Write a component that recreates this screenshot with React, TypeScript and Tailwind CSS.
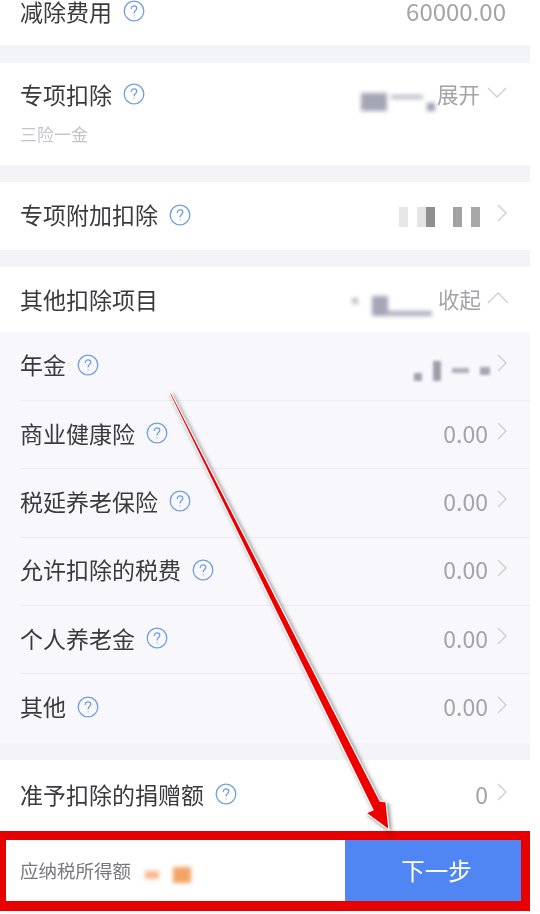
const font = '[font-family:"Noto_Sans_CJK_SC","Noto_Sans",sans-serif]';

function HelpIcon() {
  return (
    <svg width="22" height="22" viewBox="0 0 22 22" fill="none" stroke="#6f9fe0" strokeWidth="1.3" className="ml-[11px] shrink-0">
      <circle cx="11" cy="11" r="9.8" />
      <path d="M8.3 8.6c0-1.6 1.2-2.7 2.8-2.7s2.7 1 2.7 2.4c0 2.2-2.7 2.3-2.7 4.6" strokeLinecap="round" />
      <circle cx="11.1" cy="15.8" r="0.6" fill="#6f9fe0" stroke="none" />
    </svg>
  );
}

function ChevronRight() {
  return (
    <svg width="10" height="18" viewBox="0 0 10 18" fill="none" stroke="#cdcdd2" strokeWidth="1.3" className="ml-[9px] -mt-1 shrink-0">
      <path d="M1 1l8 8-8 8" />
    </svg>
  );
}

function Row({ label, value, mask }: { label: string; value?: string; mask?: React.ReactNode }) {
  return (
    <div className="flex h-full items-center justify-between pb-[3px] pr-[23px]">
      <div className="flex items-center text-[23px] text-[#3a3a3c]">
        {label}
        <HelpIcon />
      </div>
      <div className="flex items-center text-[23px] text-[#a3a3a8]">
        {mask}
        {value}
        <ChevronRight />
      </div>
    </div>
  );
}

const items = ['商业健康险', '税延养老保险', '允许扣除的税费', '个人养老金', '其他'];

export default function App() {
  return (
    <div className={`relative h-[914px] w-[540px] overflow-hidden bg-white ${font}`}>
      <div className="w-[530px] blur-[0.5px]">
        <div className="flex h-[45px] items-start justify-between pl-5 pr-[24px] text-[23px] leading-[22px] text-[#3a3a3c]">
          <div className="flex items-center">
            减除费用
            <HelpIcon />
          </div>
          <span className="text-[24px] text-[#a3a3a8]">60000.00</span>
        </div>
        <div className="h-[18px] bg-[#f3f4f7]" />

        <div className="flex h-[102px] justify-between pl-5 pr-[23px] pt-[15px]">
          <div>
            <div className="flex items-center text-[23px] leading-[32px] text-[#3a3a3c]">
              专项扣除
              <HelpIcon />
            </div>
            <div className="mt-[12px] text-[17px] leading-[24px] text-[#c4c4c8]">三险一金</div>
          </div>
          <div className="flex h-[32px] items-center text-[21.5px] text-[#a3a3a8]">
            <div className="mr-[2px] mt-4 flex items-end gap-[4px] blur-[2px]">
              <span className="h-[18px] w-[26px] bg-[#a4a5b5]" />
              <span className="mb-3 h-[4px] w-[32px] bg-[#b9bac6]" />
              <span className="h-[8px] w-[8px] bg-[#9a9bac]" />
            </div>
            展开
            <svg width="20" height="11" viewBox="0 0 20 11" fill="none" stroke="#cdcdd2" strokeWidth="1.3" className="ml-[7px] -mt-1">
              <path d="M1 1l9 9 9-9" />
            </svg>
          </div>
        </div>
        <div className="h-[17px] bg-[#f3f4f7]" />

        <div className="h-[68px] pl-5">
          <Row
            label="专项附加扣除"
            mask={
              <div className="mr-[8px] mt-1 flex gap-[9px]">
                <span className="h-[20px] w-[9px] bg-[#e6e6e6]" />
                <span className="h-[20px] w-[18px] bg-[linear-gradient(90deg,#e4e4e4_50%,#8f8f8f_50%)]" />
                <span className="ml-[9px] h-[20px] w-[9px] bg-[#a2a2a2]" />
                <span className="h-[20px] w-[9px] bg-[#a8a8a8]" />
              </div>
            }
          />
        </div>
        <div className="h-[17px] bg-[#f3f4f7]" />

        <div className="flex h-[65px] items-center justify-between pl-5 pr-[21px] text-[23px] text-[#3a3a3c]">
          其他扣除项目
          <div className="flex items-center text-[21.5px] text-[#a3a3a8]">
            <div className="mr-[6px] mt-3 flex items-end gap-[14px] blur-[2px]">
              <span className="mb-3 h-[6px] w-[6px] bg-[#b9bac6]" />
              <span className="h-[20px] w-[16px] bg-[#a4a5b5]" />
              <span className="-ml-[14px] h-[5px] w-[44px] bg-[#adaebd]" />
            </div>
            收起
            <svg width="22" height="12" viewBox="0 0 22 12" fill="none" stroke="#cdcdd2" strokeWidth="1.3" className="ml-[6px] -mt-1">
              <path d="M1 11L11 1l10 10" />
            </svg>
          </div>
        </div>

        <div className="h-[411px] bg-[#f8f8fc] pl-5">
          <div className="h-[69px] border-b border-[#ecedf1]">
            <Row
              label="年金"
              mask={
                <div className="mr-[-2px] mt-3 flex items-end gap-[11px] blur-[1.5px]">
                  <span className="h-[8px] w-[8px] bg-[#a0a1ae]" />
                  <span className="h-[20px] w-[8px] bg-[#9d9eac]" />
                  <span className="mb-2 h-[5px] w-[17px] bg-[#adaebd]" />
                  <span className="mb-[6px] h-[8px] w-[10px] bg-[#a4a5b5]" />
                </div>
              }
            />
          </div>
          {items.map((label, i) => (
            <div key={label} className={`h-[68.25px] ${i < 4 ? 'border-b border-[#ecedf1]' : ''}`}>
              <Row label={label} value="0.00" />
            </div>
          ))}
        </div>
        <div className="h-[17px] bg-[#f3f4f7]" />

        <div className="h-[71px] pl-5">
          <Row label="准予扣除的捐赠额" value="0" />
        </div>

        <div className="flex h-[80px] border-b-[10px] border-l-[6px] border-r-[9px] border-t-[9px] border-[#e60000] bg-white">
          <div className="flex flex-1 items-center pl-[14px] text-[18.5px] text-[#77777c]">
            应纳税所得额
            <div className="ml-[14px] mt-2 flex items-end gap-[14px] blur-[2px]">
              <span className="mb-1 h-[8px] w-[14px] bg-[#f7b68c]" />
              <span className="h-[16px] w-[18px] bg-[#f3a366]" />
            </div>
          </div>
          <div className="flex w-[176px] items-center justify-center bg-[#4f86f3] pl-[7px] text-[23.5px] text-white">下一步</div>
        </div>
      </div>

      <svg
        width="540"
        height="914"
        viewBox="0 0 540 914"
        className="absolute inset-0 drop-shadow-[2px_2px_2px_rgba(0,0,0,0.45)]"
      >
        <path d="M169.5 393.5L171 392.5L380 801l6 1 3 28-23-17 7-3z" fill="#ee0000" stroke="#ffffff" strokeWidth="1.2" strokeLinejoin="miter" />
      </svg>
    </div>
  );
}
